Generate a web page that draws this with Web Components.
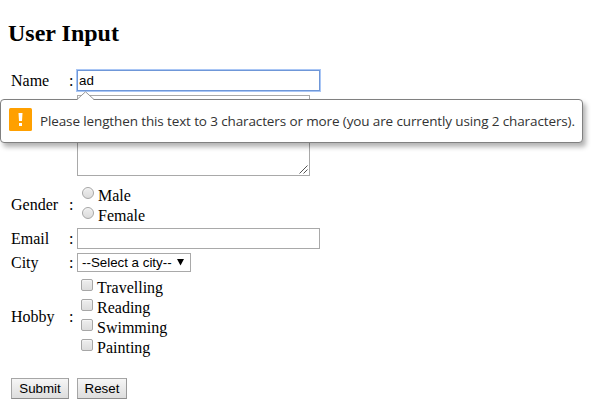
<!DOCTYPE html>
<html lang="en">
<head>
<meta charset="utf-8">
<title>User Input</title>
<style>
html{background:#fff}
body{margin:0;font:16px/20px "Liberation Serif",serif;color:#000;overflow:hidden}
</style>
</head>
<body>
<user-form></user-form>
<script>
function define(name, html, setup) {
  const t = document.createElement('template');
  t.innerHTML = html;
  customElements.define(name, class extends HTMLElement {
    constructor() {
      super();
      this.attachShadow({mode: 'open'}).append(t.content.cloneNode(true));
    }
    connectedCallback() { if (setup) setup(this, this.shadowRoot); }
  });
}

define('form-row', `
<style>
:host{display:grid;grid-template-columns:58px 8px 1fr;align-items:start;height:var(--h);margin-bottom:var(--gap)}
.l{padding-top:var(--pad,1px)}
</style>
<span class="l"></span><span class="l c"></span><div><slot></slot></div>`,
(el, r) => {
  const label = el.getAttribute('label');
  if (!label) return;
  r.querySelector('.l').textContent = label;
  r.querySelector('.c').textContent = ':';
});

define('text-field', `
<style>
:host{display:block;width:243px;height:21px}
input{display:block;box-sizing:border-box;width:243px;height:21px;margin:0;padding:1px;border:1px solid #a9a9a9;border-radius:0;background:#fff;font:13.33px "Liberation Sans",Arial,sans-serif;color:#000;outline:none}
:host([active]) input{border-color:#6f97d8;box-shadow:0 0 0 1px #a9c6f5}
</style>
<input type="text">`,
(el, r) => { r.querySelector('input').value = el.getAttribute('value') || ''; });

define('text-area', `
<style>
:host{display:flex;box-sizing:border-box;width:233px;height:81px;border:1px solid #a9a9a9;align-items:flex-end;justify-content:flex-end}
svg{display:block;margin:0 1px 1px 0}
</style>
<svg width="9" height="9" viewBox="0 0 9 9"><path d="M.5 8.5L8.5.5M4.5 8.5L8.5 4.5" stroke="#555" fill="none"/></svg>`);

define('choice-item', `
<style>
:host{display:flex;height:20px}
i{box-sizing:border-box;flex:none;width:12px;height:12px;margin:2px 4px 0 4px;border:1px solid #a6a6a6;border-radius:2px;background:linear-gradient(#eee,#dcdcdc);box-shadow:inset 0 1px 1px #f6f6f6}
:host([round]) i{margin-left:5px;border-radius:50%}
span{padding-top:var(--drop,1px)}
</style>
<i></i><span><slot></slot></span>`);

define('select-box', `
<style>
:host{display:flex;box-sizing:border-box;width:114px;height:19px;margin-top:1px;padding-left:4px;border:1px solid #a9a9a9;font:13.33px/17px "Liberation Sans",Arial,sans-serif}
svg{margin:5px 0 0 5px;flex:none}
span{white-space:nowrap}
</style>
<span><slot></slot></span><svg width="7" height="7" viewBox="0 0 7 7"><path d="M0 0H7L3.5 6.5Z"/></svg>`);

define('push-button', `
<style>
:host{display:block}
button{display:block;box-sizing:border-box;width:var(--w);height:21px;margin:0;padding:0;border:1px solid #999;border-color:#a6a6a6 #999 #8d8d8d #a6a6a6;border-radius:0;background:linear-gradient(#f6f6f6,#ddd);font:13.33px/19px "Liberation Sans",Arial,sans-serif;color:#000}
</style>
<button type="button"><slot></slot></button>`);

define('validation-bubble', `
<style>
:host{position:absolute;left:0;top:99px;box-sizing:border-box;width:583px;height:44px;display:flex;border:1px solid #808080;border-radius:4px;background:#fff;box-shadow:3px 4px 5px rgba(0,0,0,.3)}
.tip{position:absolute;left:75px;top:-9px}
.icon{flex:none;margin:8px 8px 0 8px}
span{font:13.5px/20px "Open Sans","Noto Sans",sans-serif;color:#333;padding-top:11px;white-space:nowrap;letter-spacing:-.125px}
</style>
<svg class="tip" width="19" height="10" viewBox="0 0 19 10"><path d="M1 9L9.5.8L18 9V10H1Z" fill="#fff"/><path d="M1 8.5L9.5.8L18 8.5" fill="none" stroke="#999"/></svg>
<svg class="icon" width="23" height="23" viewBox="0 0 23 23"><rect width="23" height="23" rx="1.5" fill="#ffa000"/><path d="M9.5 5H13.5L13 13H10Z M10 15H13V18H10Z" fill="#fff"/></svg>
<span><slot></slot></span>`);

define('user-form', `
<style>
:host{display:block}
h2{margin:0;padding:19px 0 0 8px;font-size:24px;line-height:28px;height:51px;box-sizing:content-box}
form{margin:0;padding-left:11px}
.actions{display:flex;gap:8px}
</style>
<h2>User Input</h2>
<form>
<form-row label="Name" style="--h:21px;--gap:4px"><text-field active value="ad"></text-field></form-row>
<form-row style="--h:81px;--gap:9px"><text-area></text-area></form-row>
<form-row label="Gender" style="--h:40px;--gap:3px;--pad:10px"><choice-item round>Male</choice-item><choice-item round>Female</choice-item></form-row>
<form-row label="Email" style="--h:21px;--gap:3px"><text-field></text-field></form-row>
<form-row label="City" style="--h:20px;--gap:5px"><select-box>--Select a city--</select-box></form-row>
<form-row label="Hobby" style="--h:80px;--gap:21px;--pad:30px"><choice-item>Travelling</choice-item><choice-item>Reading</choice-item><choice-item>Swimming</choice-item><choice-item>Painting</choice-item></form-row>
<div class="actions"><push-button style="--w:58px">Submit</push-button><push-button style="--w:50px">Reset</push-button></div>
</form>
<validation-bubble>Please lengthen this text to 3 characters or more (you are currently using 2 characters).</validation-bubble>
`);
</script>
</body>
</html>
